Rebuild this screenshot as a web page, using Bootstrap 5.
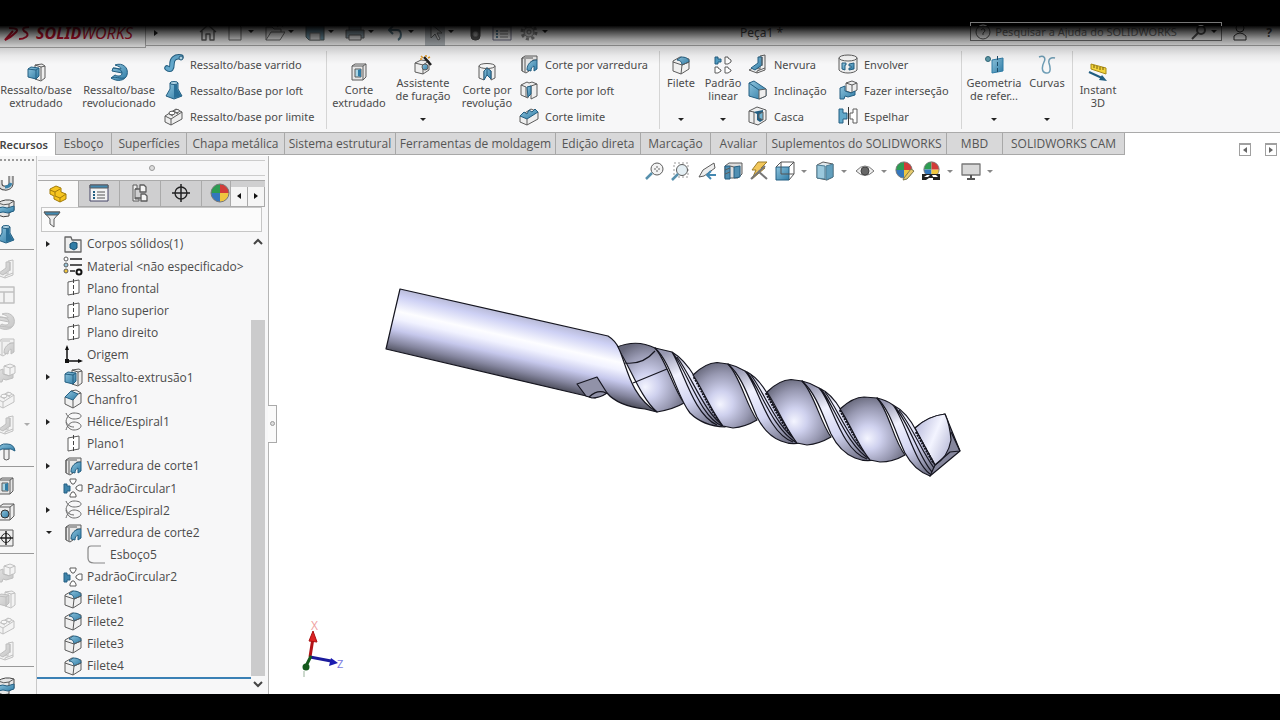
<!DOCTYPE html>
<html lang="pt-BR">
<head>
<meta charset="utf-8">
<meta name="viewport" content="width=device-width, initial-scale=1">
<title>SOLIDWORKS - Peça1</title>
<link href="https://cdn.jsdelivr.net/npm/bootstrap@5.3.0/dist/css/bootstrap.min.css" rel="stylesheet">
<style>
  body { font-family: "Open Sans", "Noto Sans", sans-serif; font-size: 12px; line-height: 13px; color: #4b4b4b; background: #fff; overflow: hidden; }
  button, input { font: inherit; color: inherit; }
  button { border: 0; background: none; padding: 0; }
  ul { list-style: none; margin: 0; padding: 0; }
  svg { display: block; flex: none; }
  .ico { width: 20px; height: 20px; fill: none; stroke: #5c5c5c; stroke-linejoin: round; }
  .letterbox { height: 26px; background: #000; flex: none; }
  .shade { position: relative; font-family: "Noto Sans", sans-serif; }
  .shade::after { content: ""; position: absolute; inset: 0 0 auto 0; height: 38px; background: linear-gradient(rgba(0,0,0,.97), rgba(0,0,0,.7) 15%, rgba(0,0,0,.4) 34%, rgba(0,0,0,.2) 52%, rgba(0,0,0,.06) 78%, transparent); pointer-events: none; }
  .titlebar { height: 20px; background: #f4f4f4; border-bottom: 1px solid #a5a5a5; }
  .brand { width: 146px; height: 22px; background: #f7f7f7; border-right: 1px solid #aaa; border-bottom: 1px solid #aaa; color: #c8102e; font-size: 16px; line-height: 15px; font-style: italic; }
  .quick { gap: 7px; width: 390px; }
  .quick .ico { opacity: .75; }
  .quick .caret { margin: 4px 4px 0 -4px; }
  .doc-title { width: 195px; }
  .help { width: 252px; height: 19px; margin-top: -4px; border: 1px solid #777; font-size: 11px; }
  .help input { border: 0; background: none; width: 192px; padding: 0; outline: 0; }
  .help input::placeholder { color: #777; opacity: 1; }
  .ribbon { height: 87px; background: #f7f7f8; border-bottom: 1px solid #aaa; }
  .group { border-right: 1px solid #d5d5d5; margin: 5px 0 3px; height: 78px; }
  .group.geo { padding-right: 4px; }
  .cmd { display: flex; flex-direction: column; align-items: center; white-space: nowrap; font-size: 11px; line-height: 13px; padding-top: 4px; height: 78px; }
  .cmd.low { padding-top: 11px; }
  .cmd .caret { margin-top: auto; margin-bottom: 8px; }
  .cmd span { margin-top: 1px; }
  .s42 { width: 42px; } .s64 { width: 64px; } .s72 { width: 72px; } .s94 { width: 94px; } .s50 { width: 50px; }
  .stack { font-size: 11px; }
  .stack button { display: flex; align-items: center; gap: 6px; height: 26px; white-space: nowrap; }
  .st1 { width: 160px; } .st2 { width: 140px; } .st3 { width: 90px; } .st4 { width: 123px; }
  .st1 button { margin-left: -2px; }
  .caret { width: 0; height: 0; border: 3px solid transparent; border-top-color: #222; border-bottom: 0; }
  .caret.dim { border-top-color: #888; }
  .tabs { height: 23px; }
  .tabs button { height: 22px; background: #d8d8d9; border: 1px solid #a8a8a8; border-left: 0; border-top: 0; color: #555; white-space: nowrap; }
  .tabs .on { background: #fff; border-bottom: 0; font-weight: 600; color: #444; width: 56px; display: flex; justify-content: flex-end; align-items: center; padding-right: 7px; overflow: hidden; font-family: "Noto Sans", sans-serif; font-size: 11px; }
  .t56 { width: 56px; } .t75 { width: 75px; } .t98 { width: 98px; } .t111 { width: 111px; } .t160 { width: 160px; } .t85 { width: 85px; } .t70 { width: 70px; } .t180 { width: 180px; } .t123 { width: 122px; }
  .side { width: 37px; background: #f7f7f7; border-right: 1px solid #c8c8c8; overflow: hidden; padding-top: 3px; }
  .side button { display: flex; align-items: center; height: 26px; margin-left: -4px; flex: none; }
  .side .off { opacity: .35; filter: grayscale(1); }
  .side hr { margin: 2px 0; border-top: 1px solid #999; opacity: 1; width: 34px; flex: none; }
  .grip { height: 2px; width: 34px; margin-bottom: 8px; background: repeating-linear-gradient(90deg, #999 0 2px, transparent 2px 4px); flex: none; }
  .panel { width: 232px; background: #f7f7f8; border-right: 1px solid #b5b5b5; }
  .pin { height: 16px; margin: 4px 3px 4px 1px; border-top: 1px solid #ccc; border-bottom: 1px solid #ccc; }
  .dot { width: 6px; height: 6px; border: 1px solid #999; border-radius: 50%; background: #ddd; }
  .ptabs { height: 27px; margin: 0 3px 0 1px; background: #cfcfd0; border-top: 1px solid #aaa; }
  .ptabs button { width: 41px; display: flex; align-items: center; justify-content: center; border-right: 1px solid #aaa; border-bottom: 1px solid #aaa; flex: none; }
  .ptabs .on { background: #f9f9f9; border-bottom: 0; }
  .ptabs .half { width: 29px; overflow: hidden; padding-left: 8px; }
  .ptabs .nav-b { width: 17px; background: #f5f5f5; align-self: flex-end; height: 20px; }
  .filter { height: 25px; margin: 0 6px 0 4px; border: 1px solid #c6c6c6; background: #fbfbfb; }
  .filter input { border: 0; outline: 0; background: none; min-width: 0; }
  .tree { border-bottom: 2px solid #3a80b5; margin-bottom: 15px; padding-top: 1px; }
  .tree li { display: flex; align-items: center; flex: 1 1 0; white-space: nowrap; }
  .tree .tw { width: 25px; height: 100%; margin-right: 1px; padding-left: 9px; flex: none; display: flex; align-items: center; }
  .tri { border: 4px solid transparent; border-left-color: #222; border-right: 0; border-top-width: 3px; border-bottom-width: 3px; }
  .tree .ico { margin-right: 4px; }
  .tree .kid { padding-left: 23px; }
  .scroll { width: 14px; margin-right: 3px; }
  .scroll .thumb { background: #cbcbcc; }
  .scroll .gap { flex: 0 0 70px; }
  .fly { left: 268px; top: 249px; width: 9px; height: 38px; background: #fafafa; border: 1px solid #aaa; border-left: 0; display: flex; align-items: center; justify-content: center; }
  .fly .dot { width: 5px; height: 5px; }
  .hud { height: 32px; padding-left: 90px; gap: 6px; }
  .hud .sp { padding-right: 2px; }
  .views { gap: 14px; padding-right: 3px; }
  .corner { width: 12px; height: 13px; border: 1px solid #a0a0a0; border-top-width: 2px; display: flex; align-items: center; justify-content: center; }
</style>
</head>
<body class="d-flex flex-column vh-100">

<svg width="0" height="0" class="position-absolute" aria-hidden="true">
  <defs>
    <linearGradient id="gb" x1="0" y1="0" x2="1" y2="1"><stop offset="0" stop-color="#8fc4dd"/><stop offset="1" stop-color="#2f7ca6"/></linearGradient>
    <linearGradient id="shaft" gradientUnits="userSpaceOnUse" x1="401" y1="289" x2="387" y2="350">
      <stop offset="0" stop-color="#b9bbd8"/><stop offset=".12" stop-color="#cdd0f4"/><stop offset=".36" stop-color="#fdfdff"/><stop offset=".48" stop-color="#f1f2ff"/><stop offset=".66" stop-color="#c6c8ec"/><stop offset=".86" stop-color="#85869f"/><stop offset="1" stop-color="#50515f"/>
    </linearGradient>
    <radialGradient id="ball" cx=".48" cy=".58" r=".62" fx=".42" fy=".64"><stop offset="0" stop-color="#f4f5ff"/><stop offset=".3" stop-color="#cfd1ee"/><stop offset=".7" stop-color="#9899b2"/><stop offset="1" stop-color="#66677a"/></radialGradient>
    <linearGradient id="ridge" x1=".3" y1="0" x2=".7" y2="1"><stop offset="0" stop-color="#9697b0"/><stop offset=".3" stop-color="#f2f3ff"/><stop offset=".65" stop-color="#d3d5f2"/><stop offset="1" stop-color="#77788e"/></linearGradient>
    <linearGradient id="tipface" x1="0" y1=".2" x2="1" y2=".8"><stop offset="0" stop-color="#b9bbdc"/><stop offset=".5" stop-color="#f3f4ff"/><stop offset="1" stop-color="#b4b6d4"/></linearGradient>
  </defs>
    <symbol id="extrude" viewBox="0 0 20 20"><path d="M9 3l7-1 3 2v12l-4 3-6-2z" fill="#eee"/><path d="M15 5v13M15 5l4-1M9 3l6 2" /><path d="M2 7l3-2 8 1v8l-3 3-8-2z" fill="url(#gb)" stroke="#245f82"/><path d="M2 7l8 1v9M10 8l3-2" stroke="#245f82"/></symbol>
    <symbol id="revolve" viewBox="0 0 20 20"><path d="M6 3C14 0 20 6 18 13c-2 6-10 7-16 3l4-3c4 2 7 1 7-2L3 9l1-3 8 1C12 5 9 4 6 3z" fill="url(#gb)" stroke="#245f82"/><path d="M4 6c5 0 9 2 9 5M2 16c4-2 9 1 14 0" stroke="#245f82"/></symbol>
    <symbol id="sweep" viewBox="0 0 20 20"><path d="M3 14c4 3 5 0 5-4 0-5 3-8 9-7" stroke="#245f82" stroke-width="5.500" stroke-linecap="round"/><path d="M3 14c4 3 5 0 5-4 0-5 3-8 9-7" stroke="#63a8cc" stroke-width="3.500" stroke-linecap="round"/><circle cx="17" cy="4" r="2" fill="#b7d9e8" stroke="#245f82"/></symbol>
    <symbol id="loft" viewBox="0 0 20 20"><path d="M6 3v6L2 16l8 3 8-3-4-7V3z" fill="url(#gb)" stroke="#245f82"/><path d="M10 5v13l7-2-4-7V4z" fill="#2a6f97" stroke="none"/><ellipse cx="10" cy="3" rx="4" ry="1.500" fill="#b5d7e7" stroke="#245f82"/></symbol>
    <symbol id="bound" viewBox="0 0 20 20"><path d="M1 10L12 3l6 3v7l-11 6-6-3z" fill="#eee"/><path d="M1 10l6 3 11-7M7 13v6M5 8l4 2M9 5l5 3"/><ellipse cx="8" cy="7" rx="3" ry="1.800" fill="#fff"/><ellipse cx="13" cy="5" rx="2.500" ry="1.500" fill="#fff"/></symbol>
    <symbol id="cutex" viewBox="0 0 20 20"><path d="M3 4l3-2h11v13l-3 3H3z" fill="#e6e6e6"/><path d="M3 4h11v14M14 4l3-2"/><path d="M6 7h6v8H6z" fill="#aad5e4"/><path d="M9 8l3-1v8l-3-1z" fill="#2f7ca6" stroke="none"/></symbol>
    <symbol id="wizard" viewBox="0 0 20 20"><path d="M2 8l6-3 8 1v9l-6 4-8-2z" fill="#eee"/><path d="M2 8l8 2v9M10 10l6-4"/><circle cx="12" cy="12" r="3" fill="url(#gb)"/><path d="M11 2l7 8" stroke="#222" stroke-width="2.500"/><path d="M8 1l2 2M13 0v2M7 4h2M15 3l2-1" stroke="#e39a28" stroke-width="1.500"/></symbol>
    <symbol id="hole" viewBox="0 0 20 20"><path d="M3 5l4-3h11v12l-4 4H3z" fill="#eee"/><path d="M3 5h11v13M14 5l4-3"/><circle cx="9" cy="12" r="4" fill="url(#gb)" stroke="#333"/></symbol>
    <symbol id="cutrev" viewBox="0 0 20 20"><path d="M2 4v12l5 2V9l3-3 4 3v9l4-2V4z" fill="#eee"/><path d="M7 9l3-3 4 3v8l-4-4-3 5z" fill="url(#gb)" stroke="#245f82"/><ellipse cx="10" cy="4" rx="8" ry="2.500" fill="#f5f5f5"/><path d="M10 5v9" stroke="#245f82"/></symbol>
    <symbol id="cutsw" viewBox="0 0 20 20"><path d="M3 4l3-2h12v4h-4c-3 2-4 5-4 11l-3 2-4-2z" fill="#e8e8e8"/><path d="M3 4h11M6 5v13M3 4v13" /><path d="M18 6c-6 0-10 4-10 10l4 1c0-3 1-4 3-5v5l3-2V8z" fill="url(#gb)" stroke="#245f82"/></symbol>
    <symbol id="cutloft" viewBox="0 0 20 20"><path d="M2 5l6-3 2 1 3-1 5 2v12l-6 3V6l-3 1v11l-7-3z" fill="#eee"/><path d="M2 5l5 2v10M12 6l6-2"/><path d="M8 7l4-1v8l-3 3z" fill="url(#gb)" stroke="#245f82"/></symbol>
    <symbol id="cutlim" viewBox="0 0 20 20"><path d="M1 10L12 3l7 3v7L8 19l-7-3z" fill="#eee"/><path d="M1 10l7 3 11-7-3-3-3 3-3-2-2 4-3-2z" fill="url(#gb)" stroke="#245f82"/><path d="M8 13v6"/></symbol>
    <symbol id="fillet" viewBox="0 0 20 20"><path d="M2 6l7-4 9 2v10l-8 5-8-3z" fill="#f0f0f0"/><path d="M6 5l4-3c4 0 8 1 8 5l-7 3c0-3-2-5-5-5z" fill="url(#gb)" stroke="#245f82"/><path d="M2 7l9 3-1 9M11 10l7-3"/></symbol>
    <symbol id="chamfer" viewBox="0 0 20 20"><path d="M2 8l6-6 5-1 5 3v10l-8 5-8-4z" fill="#f0f0f0"/><path d="M2 8l6-6 7 3-5 6z" fill="url(#gb)" stroke="#245f82"/><path d="M10 11v8M15 5l3-1"/></symbol>
    <symbol id="linpat" viewBox="0 0 20 20"><path d="M2 2h3v2h3v3H5v2H2z" fill="#4f9cc2" stroke="#245f82"/><path d="M12 2h3v1l3 2v2l-3 2h-3zM2 12h3v1l3 2v1l-3 2H2zM12 12h3v1l3 2v1l-3 2h-3z" fill="#fff"/></symbol>
    <symbol id="rib" viewBox="0 0 20 20"><path d="M12 2l5-1v15l-8 3-8-3 4-2 7 1z" fill="#eee"/><path d="M10 3v6l-7 5 4 2 7-5V3z" fill="url(#gb)" stroke="#245f82"/><path d="M14 3v9M9 19v-2l8-3"/></symbol>
    <symbol id="draft" viewBox="0 0 20 20"><path d="M1 3l5-2 12 8v7l-7 3-10-3z" fill="url(#gb)" stroke="#245f82"/><path d="M11 10l7-1v7l-7 3z" fill="#eee"/><path d="M1 3l10 7" stroke="#245f82"/></symbol>
    <symbol id="shell" viewBox="0 0 20 20"><path d="M1 5l8-4 9 3v10l-8 5-9-3z" fill="#eee"/><path d="M5 6l10-2v10l-3 2-3-2V8z" fill="#245f82" stroke="none"/><path d="M11 8l4-2v8l-4-2z" fill="#70b3d2"/><path d="M1 5l5 1v11"/></symbol>
    <symbol id="wrap" viewBox="0 0 20 20"><path d="M1 4v12c3 4 15 4 18 0V4z" fill="#eee"/><ellipse cx="10" cy="4" rx="9" ry="3" fill="#f7f7f7"/><path d="M4 9h4v2H7v5l-3-1zM11 10l5-1v6l-5 1v-2h2v-2h-2z" fill="url(#gb)" stroke="#245f82"/></symbol>
    <symbol id="inter" viewBox="0 0 20 20"><path d="M8 3l6-2 5 2v7l-5 3-6-2z" fill="#eee"/><path d="M8 3l6 2v8M14 5l5-2"/><path d="M2 8l5-2v5l6 2 4-2v4l-7 2-3-1-1 3H2z" fill="url(#gb)" stroke="#245f82"/></symbol>
    <symbol id="mirror" viewBox="0 0 20 20"><path d="M1 3h4v4h4v6H5v4H1z" fill="#62a9cb" stroke="#245f82"/><path d="M19 3h-4v4h-3v6h3v4h4z" fill="#fff"/><path d="M10.500 1v18" stroke="#333"/></symbol>
    <symbol id="refgeo" viewBox="0 0 20 20"><circle cx="4" cy="4" r="2.500" fill="#5c9aa9" stroke="#34697a"/><path d="M8 5l11-2v13l-11 2z" fill="url(#gb)" stroke="#2f7ca6"/><path d="M13.500 1v18" stroke="#1d4d6a" stroke-dasharray="4 2"/></symbol>
    <symbol id="curves" viewBox="0 0 20 20"><path d="M2 2c5-2 7 1 5 5-2 4-3 10 2 11 6 1 4-7 3-10-1-4 2-6 6-5" stroke="#6e9db5" stroke-width="1.500"/></symbol>
    <symbol id="instant" viewBox="0 0 20 20"><path d="M3 2l15 4v6L3 7z" fill="#f2d33b" stroke="#a98b16"/><path d="M6 3v3M9 4v3M12 5v3M15 5v3" stroke="#775f0b"/><path d="M1 10l13 6" stroke="#215d80" stroke-width="2"/><path d="M19 19l-8-1 3-5z" fill="#215d80" stroke="none"/></symbol>
    <symbol id="plane" viewBox="0 0 20 20"><path d="M5 4l11-2v13L5 17z" fill="#fff"/><path d="M10.500 1v18" stroke="#444" stroke-dasharray="4 2"/></symbol>
    <symbol id="origin" viewBox="0 0 20 20"><path d="M4 2v14h14" stroke="#111" stroke-width="1.500"/><path d="M4 0l2 5H2zM20 16l-5 2v-4zM2 14h4v4H2z" fill="#111" stroke="none"/></symbol>
    <symbol id="helix" viewBox="0 0 20 20"><path d="M3 1c1 3 4 6 8 6s7-1 7-3-3-3-7-3c-5 0-7 4-8 8M3 9c1 4 4 6 8 6M3 18c1-4 4-8 8-8s7 2 7 4-3 4-7 4-7-3-8-8" stroke="#6a6a6a"/></symbol>
    <symbol id="circpat" viewBox="0 0 20 20"><path d="M1 6h3v2h3v5H4v2H1z" fill="#3e84ab" stroke="#245f82"/><path d="M7 1h6v2l-2 3H9L7 3zM7 19h6v-2l-2-3H9l-2 3zM19 7h-3l-3 2v2l3 2h3z" fill="#fff"/></symbol>
    <symbol id="folder" viewBox="0 0 20 20"><path d="M2 18V3h6l1 3h9v12z" fill="#eee" stroke="#666" stroke-width="1.300"/><path d="M7 10l3-2 4 1v5l-3 2-4-2z" fill="#2f7ca6" stroke="#174d6c"/></symbol>
    <symbol id="material" viewBox="0 0 20 20"><circle cx="3" cy="3" r="2" fill="#fff"/><circle cx="3" cy="9" r="2" fill="#9bc8dd"/><circle cx="3" cy="15" r="2" fill="#f2c53b"/><path d="M7 3h12M7 9h12M7 15h5" stroke="#222" stroke-width="1.500"/><circle cx="16" cy="16" r="2.500" stroke="#111" stroke-width="2"/></symbol>
    <symbol id="sketch" viewBox="0 0 20 20"><path d="M15 1H5Q2 1 2 4v9q0 5 6 5h11" stroke="#888" stroke-width="1.200"/></symbol>
    <symbol id="part" viewBox="0 0 20 20"><path d="M2 5l6-3 5 2v4l5 2v5l-6 3-6-3v-3l-4-2z" fill="#f6c51f" stroke="#a17b0a"/><path d="M2 6l5 2v4l5 2v4M7 8l5-3M12 14l6-4" stroke="#a17b0a"/></symbol>
    <symbol id="list" viewBox="0 0 20 20"><path d="M1 2h18v16H1z" fill="#f3f3f3" stroke="#446"/><path d="M1 2h18v3H1z" fill="#4388b1"/><path d="M4 9h2M4 12h2M4 15h2" stroke="#245f82" stroke-width="2"/><path d="M8 9h8M8 12h8M8 15h8" stroke="#555"/></symbol>
    <symbol id="config" viewBox="0 0 20 20"><path d="M3 2h4v4H5v10h4v2H3z" fill="#eee"/><path d="M10 2h4l2 2v5h-6zM11 11h4l2 2v5h-6zM5 6h5M5 15h6" fill="#f4f4f4" stroke-width="1.300"/></symbol>
    <symbol id="layout" viewBox="0 0 20 20"><path d="M2 2h16v16H2zM2 7h16M8 7v11" fill="#eee" stroke-width="1.500"/></symbol>
    <symbol id="target" viewBox="0 0 20 20"><circle cx="10" cy="10" r="6" stroke="#222" stroke-width="1.300"/><path d="M10 1v18M1 10h18" stroke="#222" stroke-width="1.500"/></symbol>
    <symbol id="sphere" viewBox="0 0 20 20"><path d="M10 10L10 1A9 9 0 0 0 1 10z" fill="#2d9c52" stroke="none"/><path d="M10 10H1a9 9 0 0 0 9 9z" fill="#3477bd" stroke="none"/><path d="M10 10v9a9 9 0 0 0 9-9z" fill="#efc640" stroke="none"/><path d="M10 10h9a9 9 0 0 0-9-9z" fill="#d23b38" stroke="none"/><circle cx="10" cy="10" r="9" stroke="#777"/></symbol>
    <symbol id="funnel" viewBox="0 0 20 20"><path d="M2 3h16l-6 7v8l-4-3v-5z" fill="#eee"/><path d="M2 3h16l-2 3H4z" fill="#3f88b0"/></symbol>
    <symbol id="mag" viewBox="0 0 20 20"><circle cx="12" cy="8" r="6" fill="#f3f3f3"/><path d="M7 12l-6 6" stroke="#5891ad" stroke-width="2.500"/><path d="M12 5v6M9 8h6" stroke="#666" stroke-dasharray="2 2"/></symbol>
    <symbol id="magbox" viewBox="0 0 20 20"><path d="M3 2h14v14H3z" stroke="#999" stroke-dasharray="2 2"/><circle cx="11" cy="9" r="5.500" fill="#e4eff4"/><path d="M7 13l-6 6" stroke="#5891ad" stroke-width="2.500"/></symbol>
    <symbol id="prev" viewBox="0 0 20 20"><path d="M17 2L6 9l-4 7 5-1L18 7z" fill="#eee"/><path d="M19 14h-8M14 10l-4 4 4 4" stroke="#4388b1" stroke-width="2"/></symbol>
    <symbol id="section" viewBox="0 0 20 20"><path d="M2 5l4-3h13v11l-4 4H2z" fill="#ddd"/><path d="M2 5h5v13H2zM11 6l6-1v11l-6 1z" fill="#508fb2" stroke="#245f82"/><path d="M7 5l4 1M2 9l5-2M2 13l5-2"/></symbol>
    <symbol id="dynamic" viewBox="0 0 20 20"><path d="M9 1h9l-6 6h4L3 18l4-9H3z" fill="#f2c75a" stroke="#9c7c2b"/><path d="M2 18L16 5M9 10l9 8" stroke="#777" stroke-width="2"/></symbol>
    <symbol id="orient" viewBox="0 0 20 20"><path d="M1 6h13v13H1z" fill="url(#gb)" stroke="#245f82"/><path d="M1 6l5-5h13v12l-5 6M14 6l5-5M6 1v12h13" stroke="#555"/></symbol>
    <symbol id="cube" viewBox="0 0 20 20"><path d="M2 4l6-3 10 2v13l-6 3-10-2z" fill="#e0e8ec"/><path d="M2 4l8 1v13l-8-1z" fill="#9bc8dc" stroke="#4c7c94"/><path d="M11 5l7-2v13l-7 3z" fill="#629fbd" stroke="#4c7c94"/></symbol>
    <symbol id="eye" viewBox="0 0 20 20"><path d="M1 10q9-10 18 0-9 9-18 0z" fill="#eee" stroke="#777"/><circle cx="10" cy="10" r="4" fill="#666" stroke="#444"/></symbol>
    <symbol id="appear" viewBox="0 0 20 20"><use href="#sphere" width="18" height="18"/><path d="M9 17l7-9 3 2-7 8-4 1z" fill="#e6ca6e" stroke="#7f7a50"/></symbol>
    <symbol id="scene" viewBox="0 0 20 20"><use href="#sphere" x="2" width="17" height="17"/><path d="M1 13h18v6H1z" fill="#222" stroke="none"/><path d="M3 16l3-2h3l-2 2zM11 14h4l2 2h-5zM5 19l3-2h4v2z" fill="#fff" stroke="none"/></symbol>
    <symbol id="monitor" viewBox="0 0 20 20"><path d="M1 3h18v11H1z" fill="#d8d8d8" stroke="#777" stroke-width="1.300"/><path d="M10 14v4M6 18h8" stroke="#555" stroke-width="2"/></symbol>
    <symbol id="home" viewBox="0 0 20 20"><path d="M2 10l8-7 8 7M4 9v9h4v-6h4v6h4V9" stroke="#333" stroke-width="1.400"/></symbol>
    <symbol id="page" viewBox="0 0 20 20"><path d="M4 2h9l3 3v13H4z" stroke="#444"/></symbol>
    <symbol id="open" viewBox="0 0 20 20"><path d="M1 18V5h6l2 2h7v3M1 18l5-8h14l-5 8zM12 5l4-3 2 3" stroke="#444"/></symbol>
    <symbol id="save" viewBox="0 0 20 20"><path d="M1 2h18v16H4l-3-3z" fill="#42768f" stroke="#233"/><path d="M5 11h10v7H5z" fill="#ccc"/></symbol>
    <symbol id="print" viewBox="0 0 20 20"><path d="M4 8V2h12v6M1 8h18v8H1z" fill="#708c9b" stroke="#333"/><path d="M4 13h12v5H4z" fill="#ddd" stroke="#333"/></symbol>
    <symbol id="undo" viewBox="0 0 20 20"><path d="M4 8h8c5 0 5 8 1 10M8 4L4 8l4 4" stroke="#275468" stroke-width="2"/></symbol>
    <symbol id="arrow" viewBox="0 0 20 20"><path d="M6 2v14l4-4 3 6 2-1-3-6h5z" fill="#ddd" stroke="#444"/></symbol>
    <symbol id="light" viewBox="0 0 20 20"><rect x="6" y="1" width="9" height="17" rx="4" fill="#222" stroke="#111"/><circle cx="10.500" cy="12" r="2.500" fill="#999"/></symbol>
    <symbol id="gear" viewBox="0 0 20 20"><circle cx="10" cy="10" r="7" stroke="#666" stroke-width="3" stroke-dasharray="3 2.500"/><circle cx="10" cy="10" r="5" fill="#ddd"/><circle cx="10" cy="10" r="2"/></symbol>
    <symbol id="user" viewBox="0 0 20 20"><circle cx="10" cy="6" r="4" stroke="#333"/><path d="M4 18v-4q6-6 12 0v4z" stroke="#333"/></symbol>
    <symbol id="hook" viewBox="0 0 20 20"><path d="M4 8v4c0 5 10 6 11 0V4" stroke="#444" stroke-width="5"/><path d="M4 8v4c0 5 10 6 11 0V4" stroke="#ddd" stroke-width="3"/><path d="M9 15c3 0 5-1 6-4" stroke="#3b83aa" stroke-width="3"/></symbol>
    <symbol id="bend" viewBox="0 0 20 20"><path d="M2 5q7-5 16-2v9l-5 3v3q-6 2-11-1z" fill="#e6e6e6" stroke="#444"/><path d="M2 10q5-2 9 0l7-2v5l-6 2q-5-2-10 0z" fill="url(#gb)" stroke="#245f82"/><path d="M2 5q6 3 11 1l5-3M13 6v4"/></symbol>
    <symbol id="mush" viewBox="0 0 20 20"><path d="M8 8h5v10q-3 2-5 0z" fill="#eee"/><path d="M2 10q1-8 9-7 7 0 8 7l-4-2H6z" fill="url(#gb)" stroke="#245f82"/></symbol>
    <symbol id="crossbox" viewBox="0 0 20 20"><path d="M2 2h15v16H2z" fill="#eee"/><circle cx="10" cy="10" r="4.500" stroke="#222"/><path d="M10 3v14M3 10h14" stroke="#222" stroke-width="1.500"/></symbol>
</svg>

<div class="letterbox"></div>

<header class="shade">
  <div class="titlebar d-flex align-items-start">
    <div class="brand d-flex align-items-start flex-shrink-0 ps-1 gap-1">
      <svg width="28" height="15" viewBox="0 0 28 15" fill="none" stroke="#c8102e" stroke-width="2"><path d="M5 2q13 0 5 6-4 4-9 6L9 5M25 1q-8 0-5 4 6 3 2 6-3 2-7 2"/></svg>
      <span><b>SOLID</b>WORKS</span>
    </div>
    <span class="tri ms-2 mt-1"></span>
    <nav class="quick d-flex align-items-start flex-shrink-0 ps-4 ms-3" aria-label="Acesso rápido">
      <button aria-label="Início"><svg class="ico"><use href="#home" y="-4"/></svg></button>
      <button aria-label="Novo"><svg class="ico"><use href="#page" y="-4"/></svg></button>
      <span class="caret"></span>
      <button aria-label="Abrir"><svg class="ico"><use href="#open" y="-4"/></svg></button>
      <span class="caret"></span>
      <button aria-label="Salvar"><svg class="ico"><use href="#save" y="-4"/></svg></button>
      <span class="caret"></span>
      <button aria-label="Imprimir"><svg class="ico"><use href="#print" y="-4"/></svg></button>
      <span class="caret"></span>
      <button aria-label="Desfazer"><svg class="ico"><use href="#undo" y="-4"/></svg></button>
      <span class="caret"></span>
      <button class="bg-secondary bg-opacity-50" aria-label="Selecionar"><svg class="ico"><use href="#arrow" y="-4"/></svg></button>
      <span class="caret"></span>
      <button aria-label="Reconstruir"><svg class="ico"><use href="#light" y="-4"/></svg></button>
      <button aria-label="Propriedades"><svg class="ico"><use href="#list" y="-4"/></svg></button>
      <button aria-label="Opções"><svg class="ico"><use href="#gear" y="-4"/></svg></button>
      <span class="caret"></span>
    </nav>
    <span class="doc-title text-end ms-4">Peça1 *</span>
    <div class="help d-flex align-items-center gap-1 ms-auto ps-1">
      <svg width="16" height="16" viewBox="0 0 16 16" fill="none" stroke="#555"><circle cx="8" cy="8" r="7"/><path d="M6 6q2-3 4 0 0 2-2 3v2" /></svg>
      <input type="text" aria-label="Pesquisar" placeholder="Pesquisar a Ajuda do SOLIDWORKS">
      <svg width="16" height="16" viewBox="0 0 16 16" fill="none" stroke="#555" stroke-width="2"><circle cx="10" cy="6" r="4"/><path d="M7 9l-6 6"/></svg>
      <span class="caret"></span>
    </div>
    <svg class="ico ms-2"><use href="#user" y="-4"/></svg>
    <b class="ms-3 me-2">?</b>
  </div>

  <div class="ribbon d-flex">
    <div class="group d-flex">
      <button class="cmd low s72"><svg class="ico"><use href="#extrude"/></svg><span>Ressalto/base<br>extrudado</span></button>
      <button class="cmd low s94"><svg class="ico"><use href="#revolve"/></svg><span>Ressalto/base<br>revolucionado</span></button>
      <div class="stack st1 flex-shrink-0">
        <button><svg class="ico"><use href="#sweep"/></svg>Ressalto/base varrido</button>
        <button><svg class="ico"><use href="#loft"/></svg>Ressalto/Base por loft</button>
        <button><svg class="ico"><use href="#bound"/></svg>Ressalto/base por limite</button>
      </div>
    </div>
    <div class="group d-flex">
      <button class="cmd low s64"><svg class="ico"><use href="#cutex"/></svg><span>Corte<br>extrudado</span></button>
      <button class="cmd s64"><svg class="ico"><use href="#wizard"/></svg><span>Assistente<br>de furação</span><i class="caret"></i></button>
      <button class="cmd low s64"><svg class="ico"><use href="#cutrev"/></svg><span>Corte por<br>revolução</span></button>
      <div class="stack st2">
        <button><svg class="ico"><use href="#cutsw"/></svg>Corte por varredura</button>
        <button><svg class="ico"><use href="#cutloft"/></svg>Corte por loft</button>
        <button><svg class="ico"><use href="#cutlim"/></svg>Corte limite</button>
      </div>
    </div>
    <div class="group d-flex">
      <button class="cmd s42"><svg class="ico"><use href="#fillet"/></svg><span>Filete</span><i class="caret"></i></button>
      <button class="cmd s42"><svg class="ico"><use href="#linpat"/></svg><span>Padrão<br>linear</span><i class="caret"></i></button>
      <div class="stack st3 ms-1">
        <button><svg class="ico"><use href="#rib"/></svg>Nervura</button>
        <button><svg class="ico"><use href="#draft"/></svg>Inclinação</button>
        <button><svg class="ico"><use href="#shell"/></svg>Casca</button>
      </div>
      <div class="stack st4">
        <button><svg class="ico"><use href="#wrap"/></svg>Envolver</button>
        <button><svg class="ico"><use href="#inter"/></svg>Fazer interseção</button>
        <button><svg class="ico"><use href="#mirror"/></svg>Espelhar</button>
      </div>
    </div>
    <div class="group geo d-flex">
      <button class="cmd s64"><svg class="ico"><use href="#refgeo"/></svg><span>Geometria<br>de refer...</span><i class="caret"></i></button>
      <button class="cmd s42"><svg class="ico"><use href="#curves"/></svg><span>Curvas</span><i class="caret"></i></button>
    </div>
    <div class="group d-flex border-0">
      <button class="cmd low s50"><svg class="ico"><use href="#instant"/></svg><span>Instant<br>3D</span></button>
    </div>
  </div>
</header>

<nav class="tabs d-flex" aria-label="Guias">
  <button class="on">Recursos</button><button class="t56">Esboço</button><button class="t75">Superfícies</button><button class="t98">Chapa metálica</button><button class="t111">Sistema estrutural</button><button class="t160">Ferramentas de moldagem</button><button class="t85">Edição direta</button><button class="t70">Marcação</button><button class="t56">Avaliar</button><button class="t180">Suplementos do SOLIDWORKS</button><button class="t56">MBD</button><button class="t123">SOLIDWORKS CAM</button>
  <div class="views d-flex ms-auto align-self-end">
    <span class="corner"><svg width="4" height="6"><path d="M4 0v6L0 3z" fill="#666"/></svg></span>
    <span class="corner"><svg width="4" height="6"><path d="M0 0v6l4-3z" fill="#666"/></svg></span>
  </div>
</nav>

<main class="d-flex flex-grow-1 position-relative overflow-hidden">
  <aside class="side d-flex flex-column flex-shrink-0">
    <div class="grip"></div>
    <button aria-label="Gancho"><svg class="ico"><use href="#hook"/></svg></button>
    <button aria-label="Dobra"><svg class="ico"><use href="#bend"/></svg></button>
    <button aria-label="Loft"><svg class="ico"><use href="#loft"/></svg></button>
    <hr>
    <button class="off mt-1" aria-label="Nervura"><svg class="ico"><use href="#rib"/></svg></button>
    <button class="off" aria-label="Tabela"><svg class="ico"><use href="#layout"/></svg></button>
    <button class="off" aria-label="Revolução"><svg class="ico"><use href="#revolve"/></svg></button>
    <button class="off" aria-label="Corte"><svg class="ico"><use href="#cutsw"/></svg></button>
    <button class="off" aria-label="Interseção"><svg class="ico"><use href="#inter"/></svg></button>
    <button class="off" aria-label="Limite"><svg class="ico"><use href="#bound"/></svg></button>
    <button class="off gap-2" aria-label="Suporte"><svg class="ico"><use href="#rib"/></svg><i class="caret"></i></button>
    <button aria-label="Domo"><svg class="ico"><use href="#mush"/></svg></button>
    <hr>
    <button class="mt-1" aria-label="Corte extrudado"><svg class="ico"><use href="#cutex"/></svg></button>
    <button aria-label="Furo"><svg class="ico"><use href="#hole"/></svg></button>
    <button aria-label="Centro"><svg class="ico"><use href="#crossbox"/></svg></button>
    <hr>
    <button class="off mt-1" aria-label="Extrusão"><svg class="ico"><use href="#inter"/></svg></button>
    <button class="off" aria-label="Sólido"><svg class="ico"><use href="#extrude"/></svg></button>
    <button class="off" aria-label="Superfície"><svg class="ico"><use href="#bound"/></svg></button>
    <button class="off" aria-label="Excluir"><svg class="ico"><use href="#rib"/></svg></button>
    <hr>
    <button class="mt-1" aria-label="Unir"><svg class="ico"><use href="#bend"/></svg></button>
  </aside>

  <section class="panel d-flex flex-column flex-shrink-0">
    <div class="pin d-flex align-items-center justify-content-center"><span class="dot"></span></div>
    <div class="ptabs d-flex overflow-hidden">
      <button class="on" aria-label="Árvore"><svg class="ico"><use href="#part"/></svg></button>
      <button aria-label="Propriedades"><svg class="ico"><use href="#list"/></svg></button>
      <button aria-label="Configurações"><svg class="ico"><use href="#config"/></svg></button>
      <button aria-label="Dimensões"><svg class="ico"><use href="#target"/></svg></button>
      <button class="half" aria-label="Aparências"><svg class="ico"><use href="#sphere"/></svg></button>
      <button class="nav-b" aria-label="Anterior"><svg width="4" height="6"><path d="M4 0v6L0 3z" fill="#111"/></svg></button>
      <button class="nav-b" aria-label="Próximo"><svg width="4" height="6"><path d="M0 0v6l4-3z" fill="#111"/></svg></button>
    </div>
    <label class="filter d-flex align-items-center"><svg class="ico"><use href="#funnel"/></svg><input type="text" class="flex-grow-1" aria-label="Filtro"></label>
    <div class="d-flex flex-grow-1">
      <ul class="tree d-flex flex-column flex-grow-1">
        <li><button class="tw" aria-label="Expandir"><i class="tri"></i></button><svg class="ico"><use href="#folder"/></svg>Corpos sólidos(1)</li>
        <li><span class="tw"></span><svg class="ico"><use href="#material"/></svg>Material &lt;não especificado&gt;</li>
        <li><span class="tw"></span><svg class="ico"><use href="#plane"/></svg>Plano frontal</li>
        <li><span class="tw"></span><svg class="ico"><use href="#plane"/></svg>Plano superior</li>
        <li><span class="tw"></span><svg class="ico"><use href="#plane"/></svg>Plano direito</li>
        <li><span class="tw"></span><svg class="ico"><use href="#origin"/></svg>Origem</li>
        <li><button class="tw" aria-label="Expandir"><i class="tri"></i></button><svg class="ico"><use href="#extrude"/></svg>Ressalto-extrusão1</li>
        <li><span class="tw"></span><svg class="ico"><use href="#chamfer"/></svg>Chanfro1</li>
        <li><button class="tw" aria-label="Expandir"><i class="tri"></i></button><svg class="ico"><use href="#helix"/></svg>Hélice/Espiral1</li>
        <li><span class="tw"></span><svg class="ico"><use href="#plane"/></svg>Plano1</li>
        <li><button class="tw" aria-label="Expandir"><i class="tri"></i></button><svg class="ico"><use href="#cutsw"/></svg>Varredura de corte1</li>
        <li><span class="tw"></span><svg class="ico"><use href="#circpat"/></svg>PadrãoCircular1</li>
        <li><button class="tw" aria-label="Expandir"><i class="tri"></i></button><svg class="ico"><use href="#helix"/></svg>Hélice/Espiral2</li>
        <li><button class="tw" aria-label="Recolher"><i class="caret"></i></button><svg class="ico"><use href="#cutsw"/></svg>Varredura de corte2</li>
        <li class="kid"><span class="tw"></span><svg class="ico"><use href="#sketch"/></svg>Esboço5</li>
        <li><span class="tw"></span><svg class="ico"><use href="#circpat"/></svg>PadrãoCircular2</li>
        <li><span class="tw"></span><svg class="ico"><use href="#fillet"/></svg>Filete1</li>
        <li><span class="tw"></span><svg class="ico"><use href="#fillet"/></svg>Filete2</li>
        <li><span class="tw"></span><svg class="ico"><use href="#fillet"/></svg>Filete3</li>
        <li><span class="tw"></span><svg class="ico"><use href="#fillet"/></svg>Filete4</li>
      </ul>
      <div class="scroll d-flex flex-column align-items-center flex-shrink-0">
        <svg width="10" height="18" viewBox="0 0 10 18" fill="none" stroke="#444" stroke-width="2"><path d="M1 12l4-4 4 4"/></svg>
        <div class="gap"></div>
        <div class="thumb w-100 flex-grow-1"></div>
        <svg width="10" height="18" viewBox="0 0 10 18" fill="none" stroke="#444" stroke-width="2"><path d="M1 6l4 4 4-4"/></svg>
      </div>
    </div>
  </section>
  <button class="fly position-absolute" aria-label="Ocultar painel"><span class="dot"></span></button>

  <section class="d-flex flex-column flex-grow-1">
    <div class="hud d-flex justify-content-center align-items-center">
      <button aria-label="Zoom ajustado"><svg class="ico"><use href="#mag"/></svg></button>
      <button aria-label="Zoom de área"><svg class="ico"><use href="#magbox"/></svg></button>
      <button aria-label="Vista anterior"><svg class="ico"><use href="#prev"/></svg></button>
      <button aria-label="Vista de seção"><svg class="ico"><use href="#section"/></svg></button>
      <button aria-label="Anotações"><svg class="ico"><use href="#dynamic"/></svg></button>
      <button aria-label="Orientação"><svg class="ico"><use href="#orient"/></svg></button>
      <span class="sp"><i class="caret dim d-block"></i></span>
      <button aria-label="Estilo"><svg class="ico"><use href="#cube"/></svg></button>
      <span class="sp"><i class="caret dim d-block"></i></span>
      <button aria-label="Ocultar"><svg class="ico"><use href="#eye"/></svg></button>
      <span class="sp"><i class="caret dim d-block"></i></span>
      <button aria-label="Aparência"><svg class="ico"><use href="#appear"/></svg></button>
      <button aria-label="Cena"><svg class="ico"><use href="#scene"/></svg></button>
      <span class="sp"><i class="caret dim d-block"></i></span>
      <button aria-label="Exibição"><svg class="ico"><use href="#monitor"/></svg></button>
      <span class="sp"><i class="caret dim d-block"></i></span>
    </div>
    <svg class="flex-grow-1 w-100 h-auto" viewBox="269 187 1011 507" role="img" aria-label="Broca" stroke-linejoin="round">
      <defs>
        <g id="turn">
          <path d="M693 375Q705 363 717 362.500L728 364C740 376 746 405 757 420Q745 427 733 428L723 426C712 412 702 388 693 375z" fill="url(#ball)"/>
          <path d="M728 364Q737 366 745 371 757 376 767 393C777 411 785 428 800 443Q791 445 781 441 766 435 757 417C750 402 743 377 728 364z" fill="url(#ridge)"/>
          <path d="M745 371C758 384 766 432 793 442M747 372C760 388 773 430 797 443M751 375C764 392 778 430 798 441" fill="none"/>
          <path d="M766 393C776 411 784 428 797 441" stroke-width="2.500" stroke-dasharray="2 1" fill="none"/>
        </g>
      </defs>
      <g stroke="#15151f" stroke-width="1.200">
        <path d="M617 347Q637 339 655 348C665 358 673 388 684 403Q674 409 657 412C640 397 630 366 617 347z" fill="url(#ball)"/>
        <path d="M625 363Q643 365 655 351M633 383L667 369" fill="none"/>
        <path d="M655 348L672 352Q684 359 695 377C705 394 713 414 725 427Q703 426 690 413C677 397 672 364 655 348z" fill="url(#ridge)"/>
        <path d="M672 352C684 372 694 415 717 425M673 353C688 373 700 416 722 426M677 357C692 377 705 414 724 426" fill="none"/>
        <path d="M694 377C704 395 712 413 723 425" stroke-width="2.500" stroke-dasharray="2 1" fill="none"/>
        <use href="#turn"/>
        <use href="#turn" x="74" y="17"/>
        <path d="M840 409Q853 397 864 397L877 398C889 411 893 440 905 455Q893 462 880 462L870 460C858 446 849 421 840 409z" fill="url(#ball)"/>
        <path d="M915 428Q928 416 945 414L960 451 930 476z" fill="#85869c"/>
        <path d="M915 428Q928 416 945 414 950 425 951 440 948 457 935 465 926 450 915 428z" fill="url(#tipface)"/>
        <path d="M951 432L960 451M935 465L950 452 960 451" fill="none"/>
        <path d="M877 398Q886 400 893 405 907 412 917 432L935 465 930 476Q914 470 905 453C896 434 890 410 877 398z" fill="url(#ridge)"/>
        <path d="M893 405C906 422 914 462 930 474M895 407C910 425 920 459 932 472M899 410C913 428 922 452 934 468" fill="none"/>
        <path d="M916 432L934 464" stroke-width="2.500" stroke-dasharray="2 1" fill="none"/>
        <path d="M400 289L608 336Q616 341 619 349C627 366 630 396 657 412L645 409Q618 406 607 393L595 398 582 395 386 349z" fill="url(#shaft)" />
        <path d="M577 384L597 377 607 393Q600 398 592 398L586 396z" fill="#9192a8"/>
        <path d="M589 397Q598 389 606 393" fill="none"/>
      </g>
      <g fill="none" stroke-width="3">
        <path d="M310 657L313 638" stroke="#b31217"/><path d="M313 631l4 11-8-1z" fill="#d22" stroke="#a11" stroke-width="1"/>
        <path d="M310 657L331 661" stroke="#1b1b9c"/><path d="M338 663l-9 3 2-8z" fill="#1b1bb0" stroke="none"/>
        <path d="M311 656L306 666" stroke="#145a1c"/><circle cx="306" cy="667" r="3.500" fill="#145a1c" stroke="none"/><path d="M304 671v6" stroke="#9ab39c" stroke-width="1"/>
      </g>
      <text x="311" y="630" font-size="12" fill="#f0a0a0">X</text>
      <text x="337" y="668" font-size="11" fill="#7a7ae0">Z</text>
    </svg>
  </section>
</main>

<div class="letterbox"></div>
<script src="https://cdn.jsdelivr.net/npm/bootstrap@5.3.0/dist/js/bootstrap.bundle.min.js"></script>
</body>
</html>
